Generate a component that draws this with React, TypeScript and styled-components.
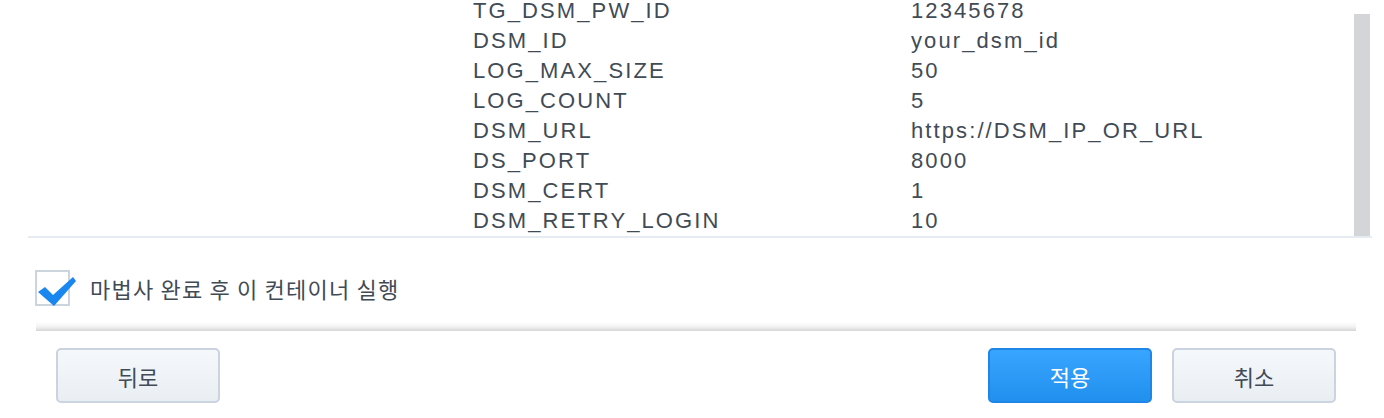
import styled, { createGlobalStyle } from 'styled-components';

const GlobalStyle = createGlobalStyle`
  html, body {
    margin: 0;
    padding: 0;
    background: #ffffff;
  }
  body {
    width: 1384px;
    height: 418px;
    overflow: hidden;
    font-family: "Liberation Sans", "Noto Sans CJK KR", Arial, sans-serif;
    color: #414b55;
  }
`;

const Page = styled.div`
  display: flex;
  flex-direction: column;
  width: 1384px;
  height: 418px;
`;

const ListPanel = styled.div`
  position: relative;
  margin-left: 28px;
  width: 1344px;
  height: 236px;
  border-bottom: 2px solid #e6ebf1;
  overflow: hidden;
  display: flex;
  flex-direction: column;
  justify-content: flex-end;
`;

const Row = styled.div`
  display: grid;
  grid-template-columns: 438px 1fr;
  flex: 0 0 30px;
  height: 30px;
  align-items: center;
  padding-left: 445px;
  font-size: 22px;
  letter-spacing: 2.1px;
  line-height: 30px;
  white-space: nowrap;
`;

const Cell = styled.span`
  overflow: hidden;
`;

const ScrollThumb = styled.div`
  position: absolute;
  right: 2px;
  top: 14px;
  bottom: 0;
  width: 16px;
  background: #d3d5d8;
`;

const CheckRow = styled.label`
  display: flex;
  align-items: center;
  gap: 20px;
  margin: 32px 0 0 35px;
  height: 36px;
  font-family: "Noto Sans CJK KR", "Liberation Sans", sans-serif;
  font-size: 22px;
  letter-spacing: 1.2px;
`;

const CheckBox = styled.span`
  position: relative;
  box-sizing: border-box;
  width: 35px;
  height: 36px;
  border: 2px solid #ccd4de;
  background: #ffffff;
  flex: 0 0 auto;
`;

const CheckMark = styled.svg`
  position: absolute;
  left: 0;
  top: 4px;
`;

const Divider = styled.div`
  margin: 16px 0 0 36px;
  width: 1320px;
  height: 8px;
  background: linear-gradient(to bottom, #ffffff 0%, #f2f2f2 60%, #dcdcdc 100%);
  border-bottom: 1px solid #d9d9d9;
`;

const ButtonBar = styled.div`
  display: flex;
  align-items: center;
  margin: 17px 48px 0 56px;
`;

const Spacer = styled.div`
  flex: 1;
`;

const Button = styled.button<{ $primary?: boolean }>`
  box-sizing: border-box;
  width: 164px;
  height: 55px;
  border-radius: 5px;
  font-family: "Noto Sans CJK KR", "Liberation Sans", sans-serif;
  font-size: 22px;
  cursor: pointer;
  border: 2px solid ${(p) => (p.$primary ? '#1e86e6' : '#cad3df')};
  color: ${(p) => (p.$primary ? '#ffffff' : '#414b55')};
  background: ${(p) =>
    p.$primary
      ? 'linear-gradient(to bottom, #38a5ff 0%, #2190ee 100%)'
      : 'linear-gradient(to bottom, #f5f8fb 0%, #e9eef3 100%)'};
  & + & {
    margin-left: 20px;
  }
`;

const envRows: [string, string][] = [
  ['TG_DSM_PW_ID', '12345678'],
  ['DSM_ID', 'your_dsm_id'],
  ['LOG_MAX_SIZE', '50'],
  ['LOG_COUNT', '5'],
  ['DSM_URL', 'https://DSM_IP_OR_URL'],
  ['DS_PORT', '8000'],
  ['DSM_CERT', '1'],
  ['DSM_RETRY_LOGIN', '10'],
];

export default function App() {
  return (
    <Page>
      <GlobalStyle />
      <ListPanel>
        {envRows.map(([name, value]) => (
          <Row key={name}>
            <Cell>{name}</Cell>
            <Cell>{value}</Cell>
          </Row>
        ))}
        <ScrollThumb />
      </ListPanel>
      <CheckRow>
        <CheckBox>
          <CheckMark width="42" height="32" viewBox="0 0 42 32">
            <path d="M1 16 L8 11 L16 19 L36 1 L39 5 L17 30 Z" fill="#1a86f0" />
          </CheckMark>
        </CheckBox>
        마법사 완료 후 이 컨테이너 실행
      </CheckRow>
      <Divider />
      <ButtonBar>
        <Button>뒤로</Button>
        <Spacer />
        <Button $primary>적용</Button>
        <Button>취소</Button>
      </ButtonBar>
    </Page>
  );
}
